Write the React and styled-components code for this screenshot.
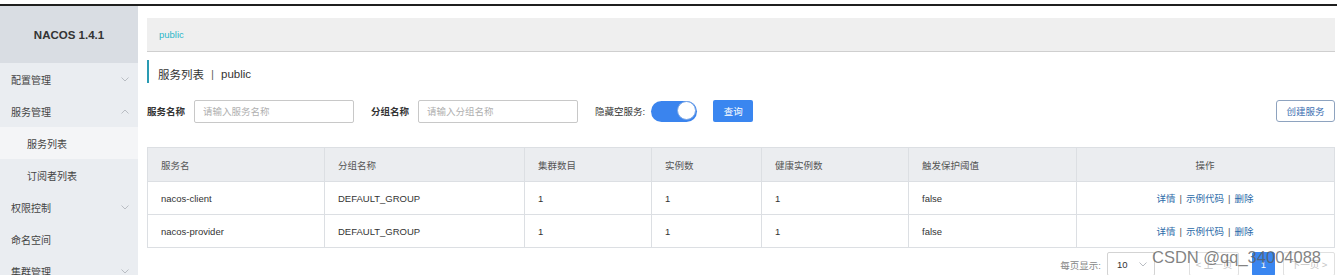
import React from "react";
import styled, { createGlobalStyle } from "styled-components";

const GlobalStyle = createGlobalStyle`
  html, body {
    margin: 0;
    padding: 0;
    background: #fff;
    font-family: "Liberation Sans", "Noto Sans CJK SC", sans-serif;
    color: #333;
    overflow: hidden;
  }
  * { box-sizing: border-box; }
`;

const Page = styled.div`
  position: relative;
  width: 1337px;
  height: 275px;
  padding-top: 4px;
  overflow: hidden;
`;

const TopRule = styled.div`
  height: 2px;
  background: #1f1f1f;
`;

const Layout = styled.div`
  display: flex;
  height: 269px;
`;

const Sidebar = styled.aside`
  width: 138px;
  flex-shrink: 0;
  background: #eaedf1;
  display: flex;
  flex-direction: column;

  & > * {
    flex-shrink: 0;
  }
`;

const Brand = styled.div`
  height: 57px;
  background: #d9dde3;
  display: flex;
  align-items: center;
  justify-content: center;
  font-weight: bold;
  font-size: 11.5px;
  color: #333;
`;

const MenuItem = styled.div`
  height: 32px;
  display: flex;
  align-items: center;
  justify-content: space-between;
  padding: 0 9px 0 ${(p) => (p.$sub ? "27px" : "11px")};
  font-size: 10px;
  color: #444;
  background: ${(p) => (p.$active ? "#f4f5f7" : "transparent")};
`;

const Chevron = ({ up }) => (
  <svg width="8" height="5" viewBox="0 0 8 5">
    <polyline
      points={up ? "0.5,4.5 4,1 7.5,4.5" : "0.5,0.5 4,4 7.5,0.5"}
      fill="none"
      stroke="#b9bdc3"
      strokeWidth="1"
    />
  </svg>
);

const Main = styled.main`
  flex: 1;
  padding: 12px 2px 0 9px;
  display: flex;
  flex-direction: column;

  & > * {
    flex-shrink: 0;
  }
`;

const NamespaceBar = styled.div`
  height: 34px;
  background: #efefef;
  border-bottom: 1px solid #cfcfcf;
  display: flex;
  align-items: center;
  padding-left: 12px;
  font-size: 9.5px;
  color: #2db7c9;
`;

const PageTitle = styled.div`
  margin-top: 8px;
  height: 23px;
  border-left: 2px solid #2a9bb3;
  padding-left: 9px;
  display: flex;
  align-items: center;
  padding-top: 4px;
  font-size: 11.5px;
  color: #333;

  span {
    margin: 0 7px;
    color: #666;
  }
`;

const SearchRow = styled.div`
  margin-top: 17px;
  height: 22px;
  display: flex;
  align-items: center;
`;

const Label = styled.label`
  font-size: 9.5px;
  font-weight: ${(p) => (p.$bold ? "bold" : "normal")};
  color: #333;
  margin-right: ${(p) => p.$gap || 9}px;
`;

const Input = styled.input`
  width: 160px;
  height: 23px;
  border: 1px solid #c8c8c8;
  border-radius: 2px;
  padding: 0 8px;
  font-family: inherit;
  font-size: 9.5px;
  margin-right: 17px;
  outline: none;

  &::placeholder {
    color: #b0b0b0;
  }
`;

const Switch = styled.div`
  width: 46px;
  height: 21px;
  border-radius: 11px;
  background: #3a84ee;
  position: relative;
  margin-right: 16px;

  &::after {
    content: "";
    position: absolute;
    right: 1px;
    top: 0.5px;
    width: 19px;
    height: 19px;
    border-radius: 50%;
    background: #fff;
    border: 1px solid #7aa6e6;
    box-sizing: border-box;
  }
`;

const PrimaryButton = styled.button`
  width: 40px;
  height: 22px;
  border: none;
  border-radius: 2px;
  background: #3a86f0;
  color: #fff;
  font-family: inherit;
  font-size: 9.5px;
  padding: 0;
`;

const OutlineButton = styled.button`
  margin-left: auto;
  width: 59px;
  height: 22px;
  border: 1px solid #8ea3bf;
  border-radius: 3px;
  background: #fff;
  color: #3d70b2;
  font-family: inherit;
  font-size: 9.5px;
  padding: 0;
`;

const Table = styled.table`
  margin-top: 25px;
  width: 100%;
  border-collapse: collapse;
  font-size: 9.5px;
  table-layout: fixed;
`;

const Th = styled.th`
  height: 34px;
  background: #ebedf0;
  border: 1px solid #dcdfe3;
  font-weight: normal;
  color: #555;
  text-align: ${(p) => (p.$center ? "center" : "left")};
  padding-left: ${(p) => (p.$center ? 0 : 13)}px;
`;

const Td = styled.td`
  height: 33px;
  border: 1px solid #dcdfe3;
  color: #333;
  text-align: ${(p) => (p.$center ? "center" : "left")};
  padding-left: ${(p) => (p.$center ? 0 : 13)}px;
`;

const Link = styled.a`
  color: #2b6aa8;
  text-decoration: none;
`;

const Sep = styled.span`
  color: #555;
  margin: 0 4px;
`;

const Pager = styled.div`
  margin-top: 4px;
  display: flex;
  align-items: flex-start;
  justify-content: flex-end;
  font-size: 9.5px;
  color: #888;
`;

const PagerLabel = styled.span`
  margin-top: 6px;
`;

const PageSize = styled.div`
  margin-left: 6px;
  width: 48px;
  height: 24px;
  border: 1px solid #d3d3d3;
  border-radius: 2px;
  display: flex;
  align-items: center;
  justify-content: space-between;
  padding: 0 7px 0 9px;
  color: #333;
`;

const PageButton = styled.div`
  height: 24px;
  min-width: ${(p) => p.$w}px;
  margin-left: ${(p) => p.$gap}px;
  border: 1px solid ${(p) => (p.$active ? "#3a86f0" : "#e0e0e0")};
  border-radius: 2px;
  background: ${(p) => (p.$active ? "#3a86f0" : "#fff")};
  color: ${(p) => (p.$active ? "#fff" : "#c4c4c4")};
  display: flex;
  align-items: center;
  justify-content: center;
`;

const Watermark = styled.div`
  position: absolute;
  left: 1152px;
  top: 248px;
  font-family: "Liberation Sans", sans-serif;
  font-size: 16.5px;
  color: rgba(90, 90, 90, 0.75);
  pointer-events: none;
`;

const menu = [
  { label: "配置管理", arrow: "down" },
  { label: "服务管理", arrow: "up" },
  { label: "服务列表", sub: true, active: true },
  { label: "订阅者列表", sub: true },
  { label: "权限控制", arrow: "down" },
  { label: "命名空间" },
  { label: "集群管理", arrow: "down" },
];

const columns = [
  { label: "服务名", width: 177 },
  { label: "分组名称", width: 200 },
  { label: "集群数目", width: 127 },
  { label: "实例数", width: 110 },
  { label: "健康实例数", width: 147 },
  { label: "触发保护阈值", width: 168 },
  { label: "操作", center: true },
];

const services = [
  { name: "nacos-client", group: "DEFAULT_GROUP" },
  { name: "nacos-provider", group: "DEFAULT_GROUP" },
];

export default function App() {
  return (
    <>
      <GlobalStyle />
      <Page>
        <TopRule />
        <Layout>
          <Sidebar>
            <Brand>NACOS 1.4.1</Brand>
            {menu.map((item) => (
              <MenuItem key={item.label} $sub={item.sub} $active={item.active}>
                {item.label}
                {item.arrow && <Chevron up={item.arrow === "up"} />}
              </MenuItem>
            ))}
          </Sidebar>
          <Main>
            <NamespaceBar>public</NamespaceBar>
            <PageTitle>
              服务列表<span>|</span>public
            </PageTitle>
            <SearchRow>
              <Label $bold>服务名称</Label>
              <Input placeholder="请输入服务名称" />
              <Label $bold>分组名称</Label>
              <Input placeholder="请输入分组名称" />
              <Label $gap={6}>隐藏空服务:</Label>
              <Switch />
              <PrimaryButton>查询</PrimaryButton>
              <OutlineButton>创建服务</OutlineButton>
            </SearchRow>
            <Table>
              <colgroup>
                {columns.map((c) => (
                  <col key={c.label} style={c.width ? { width: c.width } : undefined} />
                ))}
              </colgroup>
              <thead>
                <tr>
                  {columns.map((c) => (
                    <Th key={c.label} $center={c.center}>
                      {c.label}
                    </Th>
                  ))}
                </tr>
              </thead>
              <tbody>
                {services.map((s) => (
                  <tr key={s.name}>
                    <Td>{s.name}</Td>
                    <Td>{s.group}</Td>
                    <Td>1</Td>
                    <Td>1</Td>
                    <Td>1</Td>
                    <Td>false</Td>
                    <Td $center>
                      <Link>详情</Link>
                      <Sep>|</Sep>
                      <Link>示例代码</Link>
                      <Sep>|</Sep>
                      <Link>删除</Link>
                    </Td>
                  </tr>
                ))}
              </tbody>
            </Table>
            <Pager>
              <PagerLabel>每页显示:</PagerLabel>
              <PageSize>
                10
                <Chevron />
              </PageSize>
              <PageButton $w={50} $gap={34}>&lt; 上一页</PageButton>
              <PageButton $w={23} $gap={13} $active>
                1
              </PageButton>
              <PageButton $w={52} $gap={8}>下一页 &gt;</PageButton>
            </Pager>
          </Main>
        </Layout>
        <Watermark>CSDN @qq_34004088</Watermark>
      </Page>
    </>
  );
}
